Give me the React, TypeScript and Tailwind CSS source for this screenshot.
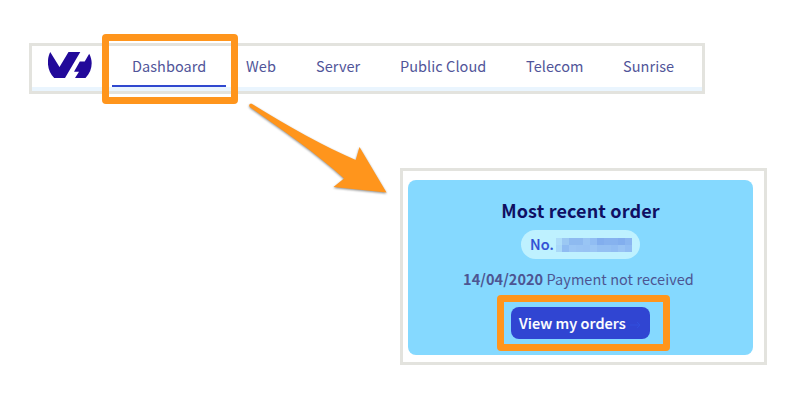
const tabs = [
  { label: 'Web', cell: 'ml-5 w-[70px]' },
  { label: 'Server', cell: 'w-[84px]' },
  { label: 'Public Cloud', cell: 'w-[126px]' },
  { label: 'Telecom', cell: 'w-[97px]' },
  { label: 'Sunrise', cell: '' },
];

const mosaic = [
  ['#addcf9', '#9bc8f3', '#8ebaf0', '#8ebaf0', '#99c5f4', '#91bdf3', '#82aeee', '#86b2ef', '#86b2ef', '#82aeee', '#8ab6f0'],
  ['#a9d8f8', '#8fbcf2', '#9bc6f5', '#99c4f4', '#98c3f4', '#9bc6f5', '#94c0f3', '#94c0f3', '#91bdf3', '#98c3f4', '#91bdf3'],
];

function Logo() {
  return (
    <svg className="ml-4 mt-1.5 h-[26px] w-11 shrink-0" viewBox="0 0 44 26" fill="#22099a">
      <path d="M2.2 0 11.5 15 20.5 0H32.3L17 26H6.2C-.8 19-1.7 8.2 2.2 0Z" />
      <path d="M41.2 1.7C45.3 9 44.5 19 37.5 26H27L31 19.7H26L31.8 9.5H36.7Z" />
    </svg>
  );
}

function NavBar() {
  return (
    <nav className="ml-[29px] flex h-[51px] w-[676px] border-[3px] border-[#e3e3de] bg-white text-[14.5px] leading-[39px] tracking-[0.06px] text-[#515599] shadow-[inset_0_-4px_0_#eaf5fe]">
      <Logo />
      <div className="ml-5 h-[41px] w-[114px] border-b-2 border-[#3048cf] pl-5">Dashboard</div>
      {tabs.map((tab) => (
        <div key={tab.label} className={`whitespace-nowrap ${tab.cell}`}>{tab.label}</div>
      ))}
    </nav>
  );
}

function OrderCard() {
  return (
    <section className="ml-[400px] mt-[74px] h-[197px] w-[367px] border-[3px] border-[#e3e3de] bg-white pl-[5px] pt-[9px]">
      <div className="flex h-[175px] w-[345px] flex-col items-center rounded-lg bg-[#85d9ff] pt-[17px]">
        <h2 className="text-[18px] font-bold leading-[26px] tracking-[0.13px] text-[#100f62]">Most recent order</h2>
        <div className="mt-[7px] flex h-[29px] w-[119px] items-center rounded-full bg-[#bef1ff] pl-[9px]">
          <span className="mb-[2px] w-[26px] text-[14.5px] font-medium leading-[27px] text-[#3150d5] [-webkit-text-stroke:0.15px_#3150d5]">No.</span>
          <div className="mt-px grid w-[76px] grid-cols-[6px_repeat(10,7px)]">
            {mosaic.flat().map((color, i) => (
              <span key={i} className="h-[7px]" style={{ backgroundColor: color }} />
            ))}
          </div>
        </div>
        <p className="mt-[8px] -translate-x-[2px] whitespace-nowrap text-[14.5px] leading-[24px] tracking-[0.05px] text-[#4d5592]">
          <b>14/04/2020</b> Payment not received
        </p>
        <button className="mt-[16px] flex h-8 w-[139px] items-center rounded-lg bg-[#3045d2] pl-2 text-[14.5px] font-medium leading-8 tracking-[0.06px] text-white [-webkit-text-stroke:0.15px_#ffffff]">
          <span className="w-[111px] whitespace-nowrap text-left">View my orders</span>
          <svg className="mt-1 h-2 w-[11px]" viewBox="0 0 11 8" fill="none" stroke="#304fdc">
            <path d="M0 4H10M7 1l3 3-3 3" />
          </svg>
        </button>
      </div>
    </section>
  );
}

export default function App() {
  return (
    <main className="relative h-[400px] w-[800px] overflow-hidden bg-white pt-[43px] font-['Noto_Sans_CJK_SC',sans-serif]">
      <NavBar />
      <OrderCard />
      <div className="absolute left-[102px] top-[34px] h-[70px] w-[136px] rounded-[4px] border-[7px] border-[#ff951c]" />
      <div className="absolute left-[497px] top-[295px] h-[56px] w-[173px] rounded-[4px] border-[7px] border-[#ff951c]" />
      <svg className="absolute left-[235px] top-[90px] h-[120px] w-[170px] drop-shadow-[0_1px_1px_rgba(0,0,0,0.45)]" viewBox="0 0 170 120">
        <path
          d="M17.5 14.2 C52 36 91 57 120.7 70 L124.5 57 L151.5 102.5 L98.5 97 L109 88.5 C80 62 47 40 15 17.2 C13 15 15 13 17.5 14.2Z"
          fill="#ff951c"
        />
      </svg>
    </main>
  );
}
